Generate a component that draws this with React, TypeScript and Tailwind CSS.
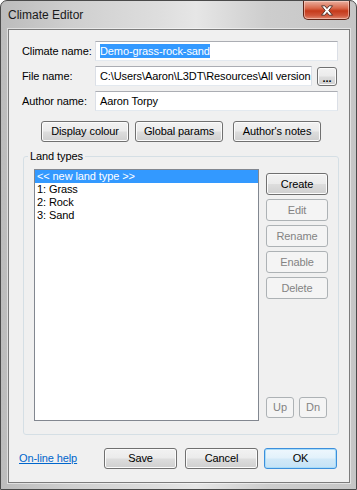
import React from "react";

const btn =
  "flex items-center justify-center rounded-[3px] border border-[#707070] bg-[linear-gradient(to_bottom,#f2f2f2_0%,#ebebeb_48%,#dddddd_52%,#cfcfcf_100%)] shadow-[inset_0_0_0_1px_#fbfbfb] text-black";
const btnDis =
  "flex items-center justify-center rounded-[3px] border border-[#adb2b5] bg-[#f4f4f4] text-[#838383]";
const field =
  "h-[20px] border border-[#abadb3] border-b-[#e3e9ef] border-x-[#dbdfe6] bg-white flex items-center pl-[4px] overflow-hidden whitespace-nowrap";

export default function App() {
  return (
    <div className="w-[357px] h-[490px] flex flex-col rounded-t-[7px] border border-[#4a4a4a] bg-[linear-gradient(90deg,#bcbcbc_0%,#cfcfcf_20%,#dedede_45%,#e6e6e6_55%,#cdcdcd_75%,#c6c6c6_100%)] font-['Liberation_Sans',sans-serif] text-[11px] tracking-[-0.1px] text-black overflow-hidden">
      {/* Title bar */}
      <div className="h-[28px] flex items-start shrink-0">
        <div className="pl-[7px] pt-[7px] text-[12px] leading-[15px] tracking-normal text-[#1a1a1a]">Climate Editor</div>
        <div className="ml-auto mr-[6px] w-[47px] h-[19px] rounded-b-[5px] border border-t-0 border-[#5e2417] bg-[linear-gradient(to_bottom,#eab0a0_0%,#d9684b_40%,#c53a1b_55%,#d0553a_80%,#e08a72_100%)] shadow-[inset_0_0_0_1px_rgba(255,220,210,0.55)] flex items-center justify-center">
          <svg width="14" height="11" viewBox="0 0 14 11">
            <path
              d="M1.5 0.8 H4.8 L7 3.5 L9.2 0.8 H12.5 L8.8 5.5 L12.5 10.2 H9.2 L7 7.5 L4.8 10.2 H1.5 L5.2 5.5 Z"
              fill="#ffffff"
              stroke="#4a2a24"
              strokeWidth="0.9"
              strokeLinejoin="round"
            />
          </svg>
        </div>
      </div>

      {/* Client area */}
      <div className="ml-[7px] mr-[6px] h-[454px] shrink-0 border border-[#7c7c7c] bg-[#f0f0f0] flex flex-col shadow-[0_0_0_1px_rgba(255,255,255,0.5)]">
        <div className="pt-[11px] pl-[13px] flex flex-col gap-[5px]">
          <div className="flex items-center">
            <div className="w-[73px]">Climate name:</div>
            <div className={field + " w-[243px] border-[#7eb4ea]"}>
              <span className="bg-[#3399ff] text-white leading-[14px]">Demo-grass-rock-sand</span>
            </div>
          </div>
          <div className="flex items-center">
            <div className="w-[73px]">File name:</div>
            <div className={field + " w-[217px] shrink-0"}>C:\Users\Aaron\L3DT\Resources\All version</div>
            <div className={btn + " ml-[5px] w-[20px] h-[19px] items-end pb-[2px] text-[#302070] font-bold leading-[10px]"}>...</div>
          </div>
          <div className="flex items-center">
            <div className="w-[73px]">Author name:</div>
            <div className={field + " w-[243px]"}>Aaron Torpy</div>
          </div>
        </div>

        <div className="mt-[10px] pl-[32px] flex">
          <div className={btn + " w-[88px] h-[21px]"}>Display colour</div>
          <div className={btn + " ml-[6px] w-[88px] h-[21px]"}>Global params</div>
          <div className={btn + " ml-[10px] w-[88px] h-[21px]"}>Author's notes</div>
        </div>

        <fieldset className="mt-[7px] ml-[14px] w-[316px] h-[286px] border border-[#d5dfe5] rounded-[3px] pl-[10px] pr-[10px] pt-[6px] min-w-0">
          <legend className="-ml-[6px] px-[2px] leading-[14px]">Land types</legend>
          <div className="flex">
            <div className="w-[225px] h-[252px] border border-[#828790] bg-white flex flex-col">
              <div className="bg-[#3399ff] text-white pl-[2px] leading-[13px]">&lt;&lt; new land type &gt;&gt;</div>
              <div className="pl-[2px] leading-[13px]">1: Grass</div>
              <div className="pl-[2px] leading-[13px]">2: Rock</div>
              <div className="pl-[2px] leading-[13px]">3: Sand</div>
            </div>
            <div className="ml-[7px] h-[252px] flex flex-col pt-[4px] pb-[3px]">
              <div className="flex flex-col gap-[4px]">
                <div className={btn + " w-[62px] h-[22px] border-[#3a3a3a] shadow-[inset_0_0_0_1px_#d8d8d8]"}>Create</div>
                <div className={btnDis + " w-[62px] h-[22px]"}>Edit</div>
                <div className={btnDis + " w-[62px] h-[22px]"}>Rename</div>
                <div className={btnDis + " w-[62px] h-[22px]"}>Enable</div>
                <div className={btnDis + " w-[62px] h-[22px]"}>Delete</div>
              </div>
              <div className="mt-auto flex gap-[5px]">
                <div className={btnDis + " w-[28px] h-[21px]"}>Up</div>
                <div className={btnDis + " w-[28px] h-[21px]"}>Dn</div>
              </div>
            </div>
          </div>
        </fieldset>

        <div className="mt-[13px] flex items-center">
          <div className="ml-[10px] w-[85px] text-[#0066cc] underline">On-line help</div>
          <div className={btn + " w-[73px] h-[21px]"}>Save</div>
          <div className={btn + " ml-[8px] w-[73px] h-[21px]"}>Cancel</div>
          <div className="ml-[6px] w-[73px] h-[21px] rounded-[3px] border border-[#3c8fdc] bg-[linear-gradient(to_bottom,#eef7fd_0%,#e2f1fb_48%,#d2e9f8_52%,#c4e2f6_100%)] shadow-[inset_0_0_0_1px_#a9dcf8] flex items-center justify-center">OK</div>
        </div>
      </div>
    </div>
  );
}
